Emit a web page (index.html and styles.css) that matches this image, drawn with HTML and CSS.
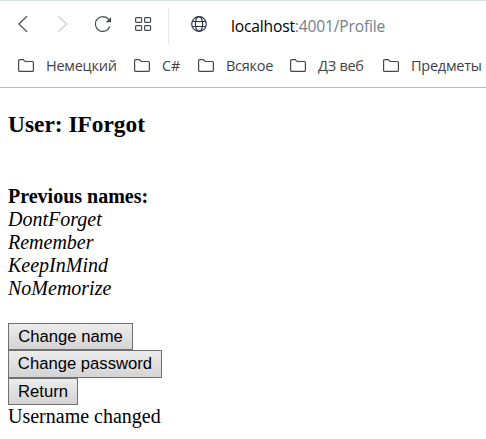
FILE: index.html
```
<!DOCTYPE html>
<html lang="ru">
<head>
<meta charset="utf-8">
<title>Profile</title>
<link rel="stylesheet" href="styles.css">
</head>
<body>
<svg class="defs" aria-hidden="true"><symbol id="folder" viewBox="0 0 16 13"><path d="M.6 11.400V1.600q0-1 1-1h3.600l2 1.900h7.200q1 0 1 1v7.900q0 1-1 1H1.600q-1 0-1-1z"/></symbol></svg>
<header class="browser">
  <div class="toolbar">
    <svg class="icon back" viewBox="0 0 16 16"><path d="M8.900 .2 .9 8l8 7.800"/></svg>
    <svg class="icon forward" viewBox="0 0 16 16"><path d="M.3 .2 8.500 8 .3 15.800"/></svg>
    <svg class="icon reload" viewBox="0 0 17 16"><path d="M14.800 10.500A7.400 7.400 0 1 1 13.600 3.400"/><path class="solid" d="M16 1v5.200h-5.400z"/></svg>
    <svg class="icon tiles" viewBox="0 0 17 16"><rect x=".6" y="1.600" width="6" height="4.800" rx=".8"/><rect x="9.600" y="1.600" width="6" height="4.800" rx=".8"/><rect x=".6" y="9.600" width="6" height="4.800" rx=".8"/><rect x="9.600" y="9.600" width="6" height="4.800" rx=".8"/></svg>
    <span class="divider"></span>
    <svg class="icon globe" viewBox="0 0 16 16"><circle cx="8" cy="8" r="7.300"/><ellipse cx="8" cy="8" rx="3.600" ry="7.300"/><path d="M1.500 5.500h13M1.500 10.500h13"/></svg>
    <span class="url"><b>localhost</b>:4001/Profile</span>
  </div>
  <nav class="bookmarks">
    <span class="bookmark"><svg><use href="#folder"/></svg>Немецкий</span>
    <span class="bookmark"><svg><use href="#folder"/></svg>C#</span>
    <span class="bookmark"><svg><use href="#folder"/></svg>Всякое</span>
    <span class="bookmark"><svg><use href="#folder"/></svg>ДЗ веб</span>
    <span class="bookmark"><svg><use href="#folder"/></svg>Предметы</span>
  </nav>
</header>
<main>
  <h3>User: IForgot</h3>
  <section class="names">
    <b>Previous names:</b>
    <i>DontForget</i>
    <i>Remember</i>
    <i>KeepInMind</i>
    <i>NoMemorize</i>
  </section>
  <div class="actions">
    <button class="name">Change name</button>
    <button class="password">Change password</button>
    <button class="return">Return</button>
  </div>
  <p>Username changed</p>
</main>
</body>
</html>
```

FILE: styles.css
```
* { box-sizing: border-box; }
body { margin: 0; background: #fff; overflow: hidden; color: #000; font: 20px/23px "Liberation Serif", serif; }
.defs { position: absolute; width: 0; height: 0; }
.browser { height: 88px; border-top: 1px solid #d5dde7; border-bottom: 1px solid #b3becc; font-family: "Open Sans", sans-serif; }
.toolbar { display: flex; align-items: center; height: 47px; padding-left: 18px; }
.icon { flex: none; width: 16px; height: 16px; margin-bottom: 1px; fill: none; stroke: #484b50; stroke-width: 1.2; }
.forward { margin-left: 24px; stroke: #c9cacc; }
.reload { width: 17px; margin-left: 21px; }
.reload .solid { fill: #484b50; stroke: none; }
.tiles { width: 17px; margin-left: 23px; }
.divider { width: 1px; height: 36px; margin: 2px 22px 0 16px; background: #e4e6ea; }
.globe { stroke: #2d3746; }
.url { margin-left: 24px; margin-top: 3px; font-size: 15.600px; letter-spacing: -.17px; color: #728093; white-space: nowrap; }
.url b { font-weight: 400; color: #000; }
.bookmarks { display: grid; grid-template-columns: 116px 64px 92px 93px 100px; align-items: center; height: 34px; padding-left: 18px; }
.bookmark { display: flex; align-items: center; gap: 12px; font-size: 14.500px; letter-spacing: -.25px; color: #3f4247; white-space: nowrap; }
.bookmark svg { flex: none; width: 16px; height: 13px; fill: none; stroke: #45484c; stroke-width: 1.2; }
main { padding: 23px 8px 0; }
h3 { margin: 0; font-size: 23.4px; line-height: 27px; }
.names { display: flex; flex-direction: column; margin-top: 47px; }
.actions { display: flex; flex-direction: column; align-items: flex-start; margin-top: 23px; }
button { height: 27px; margin: 0; padding: 0 0 1px; border: 1px solid #707070; border-radius: 0; background: linear-gradient(#ececec, #d4d4d4); color: #000; font: 16.67px/19px "Liberation Sans", sans-serif; }
.name { width: 125px; }
.password { width: 154px; height: 28px; }
.return { width: 70px; }
p { margin: 0; }
```
